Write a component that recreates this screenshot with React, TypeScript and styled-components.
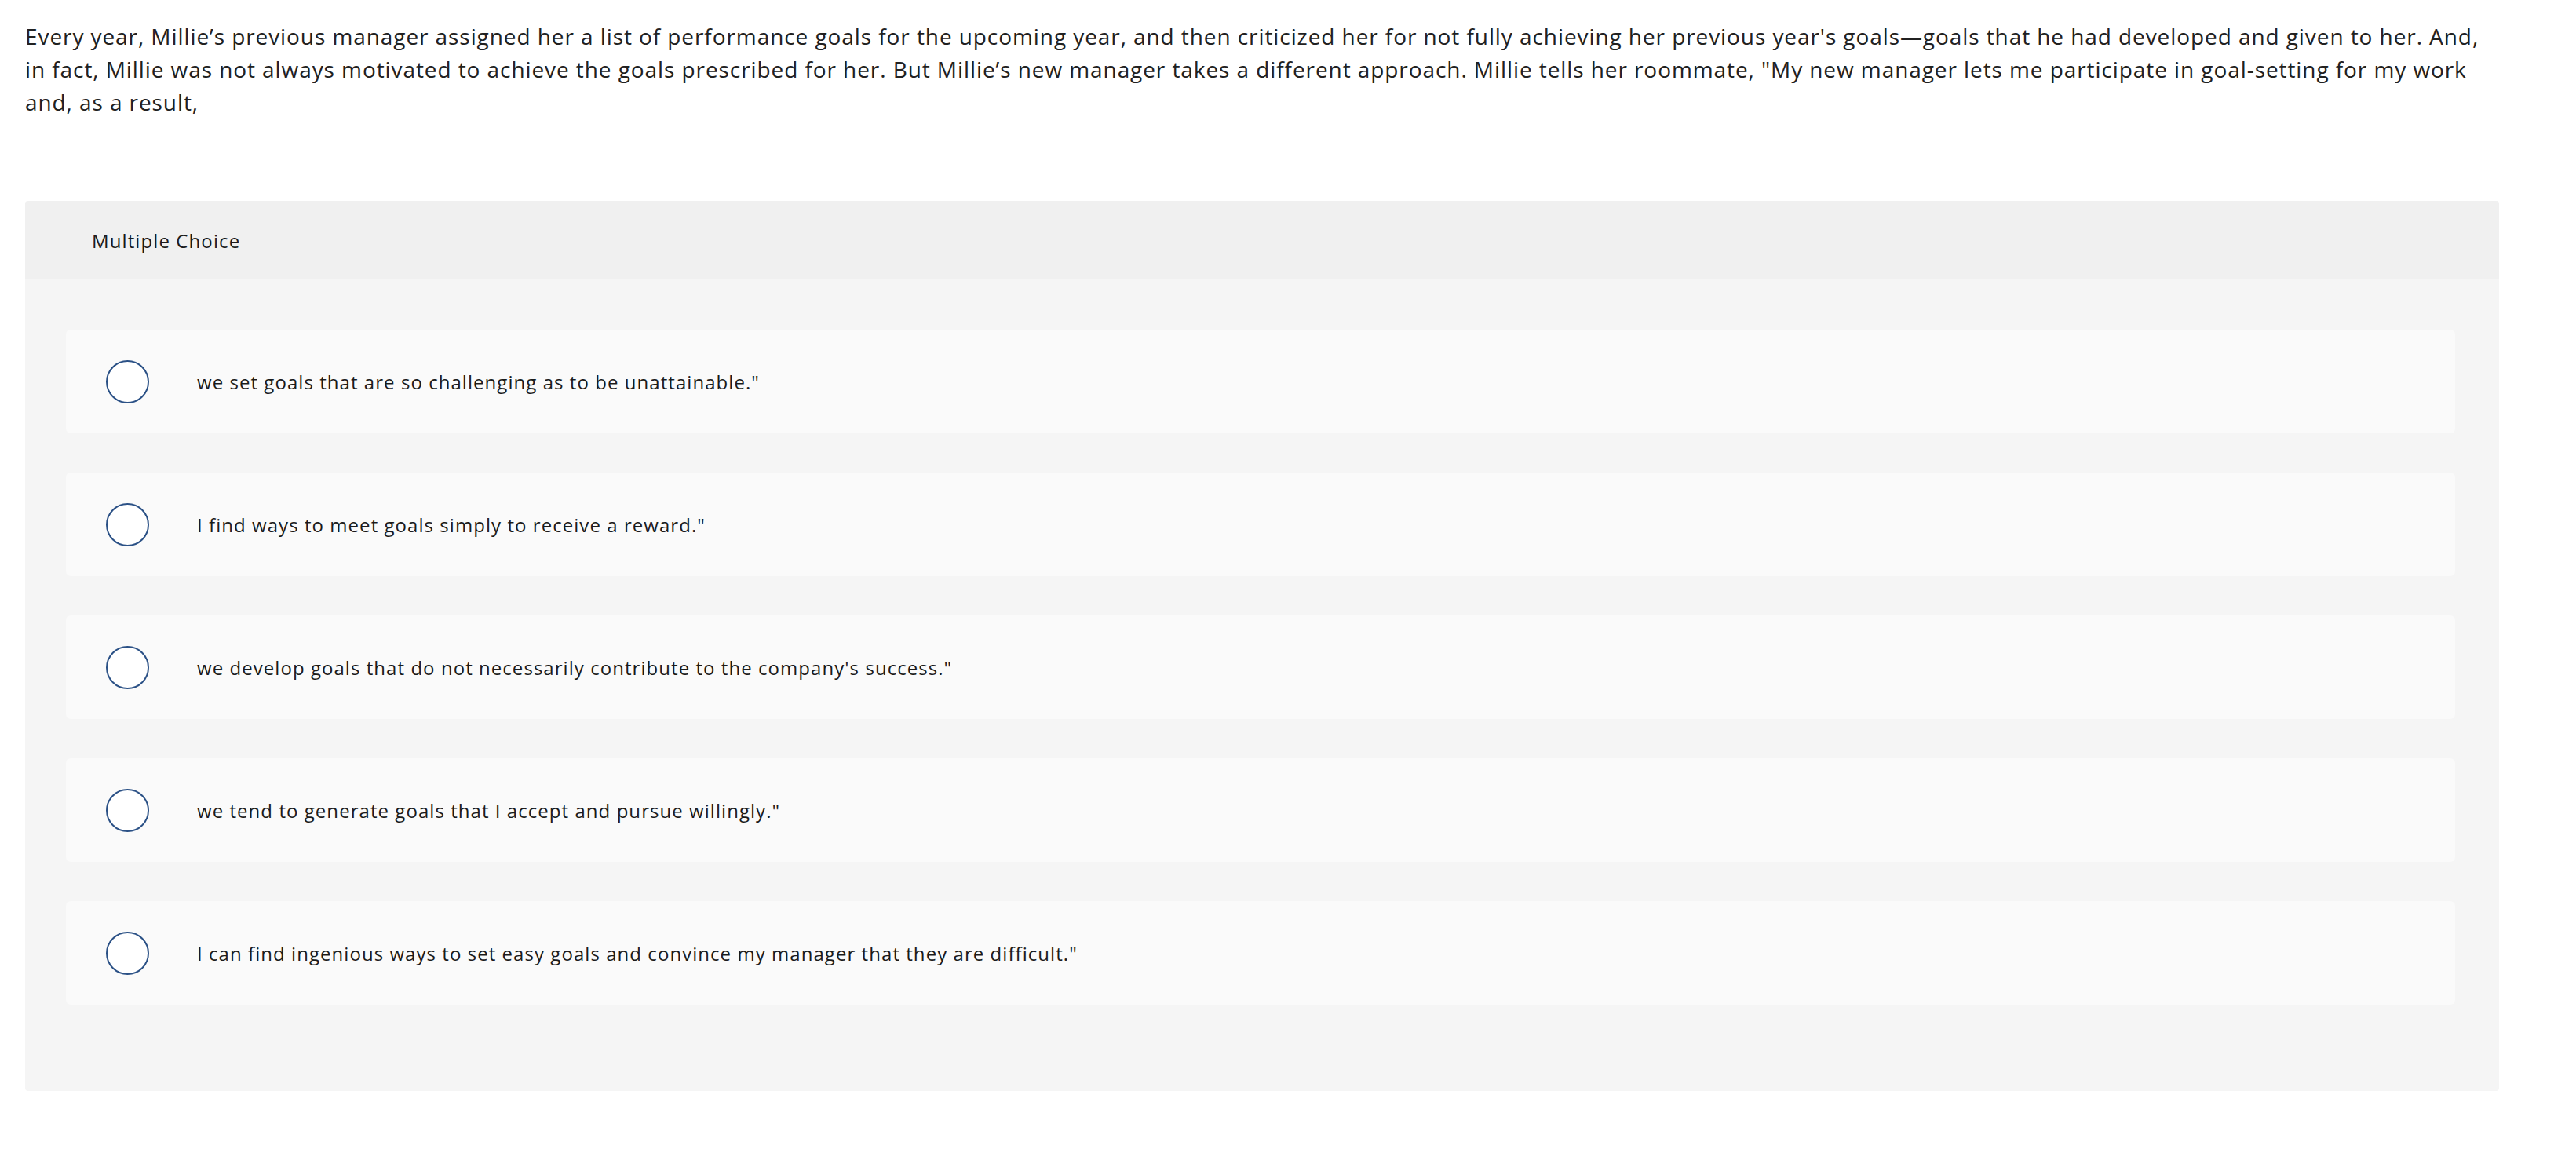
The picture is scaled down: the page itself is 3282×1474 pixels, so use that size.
import React from "react";
import styled, { createGlobalStyle } from "styled-components";

const GlobalStyle = createGlobalStyle`
	html, body {
		margin: 0;
		padding: 0;
		background: #fff;
	}

	body {
		font-family: "Open Sans", Lato, Arial, sans-serif;
		color: #212121;
	}
`;

const Page = styled.div`
	padding: 25px 98px 60px 32px;
`;

const Prompt = styled.p`
	margin: 0 0 105px 0;
	font-size: 28px;
	line-height: 42px;
	letter-spacing: 0.92px;
	color: #212121;
`;

const Card = styled.section`
	background: #f5f5f5;
	border-radius: 4px;
	overflow: hidden;
`;

const CardHeader = styled.header`
	height: 100px;
	display: flex;
	align-items: center;
	padding-left: 85px;
	background: #f0f0f0;
	font-size: 24px;
	letter-spacing: 1.1px;
	color: #1b1b1b;
`;

const Choices = styled.div`
	display: flex;
	flex-direction: column;
	gap: 50px;
	padding: 64px 56px 110px 52px;
`;

const Choice = styled.label`
	height: 132px;
	display: flex;
	align-items: center;
	padding-left: 51px;
	background: #fafafa;
	border-radius: 6px;
	cursor: pointer;
`;

const Radio = styled.span`
	width: 55px;
	height: 55px;
	box-sizing: border-box;
	border: 2px solid #2b5186;
	border-radius: 50%;
	background: #fff;
	flex-shrink: 0;
`;

const ChoiceText = styled.span`
	margin-left: 61px;
	font-size: 24px;
	letter-spacing: 1.05px;
	color: #1b1b1b;
`;

const options = [
	"we set goals that are so challenging as to be unattainable.\"",
	"I find ways to meet goals simply to receive a reward.\"",
	"we develop goals that do not necessarily contribute to the company's success.\"",
	"we tend to generate goals that I accept and pursue willingly.\"",
	"I can find ingenious ways to set easy goals and convince my manager that they are difficult.\"",
];

const App = () => {
	return (
		<Page>
			<GlobalStyle />
			<Prompt>
				Every year, Millie’s previous manager assigned her a list of performance goals for the upcoming year, and
				then criticized her for not fully achieving her previous year's goals—goals that he had developed and given
				to her. And, in fact, Millie was not always motivated to achieve the goals prescribed for her. But Millie’s
				new manager takes a different approach. Millie tells her roommate, "My new manager lets me participate in
				goal-setting for my work and, as a result,
			</Prompt>
			<Card>
				<CardHeader>Multiple Choice</CardHeader>
				<Choices>
					{options.map((text) => (
						<Choice key={text}>
							<Radio />
							<ChoiceText>{text}</ChoiceText>
						</Choice>
					))}
				</Choices>
			</Card>
		</Page>
	);
};

export default App;
